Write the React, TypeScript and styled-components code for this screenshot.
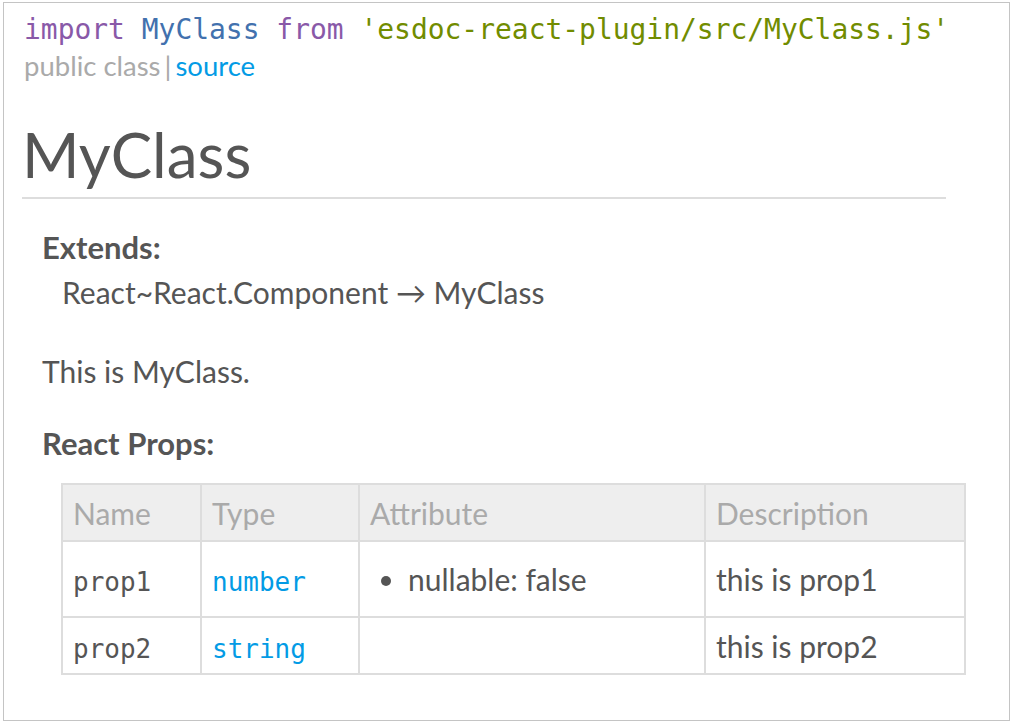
import React from "react";
import styled, { createGlobalStyle } from "styled-components";

const Global = createGlobalStyle`
  html, body { margin: 0; padding: 0; background: #fff; }
  body { font-family: "Lato", "Noto Sans", sans-serif; color: #555; }
`;

const Frame = styled.div`
  box-sizing: border-box;
  margin: 2px 0 0 3px;
  width: 1007px;
  height: 719px;
  border: 1px solid #c4c4c4;
  padding: 8px 0 0 20px;
  overflow: hidden;
`;

const ImportLine = styled.div`
  font-family: "DejaVu Sans Mono", monospace;
  font-size: 27.95px;
  line-height: 38px;
  white-space: pre;
`;

const Tok = styled.span<{ $kind: "kw" | "id" | "str" }>`
  color: ${(p) => (p.$kind === "kw" ? "#8959a8" : p.$kind === "id" ? "#4271ae" : "#718c00")};
`;

const Meta = styled.div`
  font-size: 27.5px;
  line-height: 34px;
  color: #aaa;
`;

const Sep = styled.span`
  margin: 0 4px;
`;

const Link = styled.a`
  color: #039be5;
  text-decoration: none;
`;

const Title = styled.h1`
  margin: 35px 0 0 -2px;
  width: 924px;
  font-size: 62px;
  font-weight: 400;
  line-height: 72px;
  padding-bottom: 7px;
  border-bottom: 2px solid #ddd;
  color: #555;
`;

const Body = styled.div`
  padding-left: 18px;
  font-size: 30px;
`;

const Label = styled.div<{ $gap: number }>`
  font-weight: 700;
  font-size: 31px;
  margin-top: ${(p) => p.$gap}px;
  line-height: 40px;
`;

const ExtendsLine = styled.div`
  padding-left: 20px;
  line-height: 50px;
`;

const Desc = styled.p`
  margin: 34px 0 0;
  line-height: 40px;
`;

const PropsTable = styled.table`
  margin: 20px 0 0 19px;
  border-collapse: collapse;
  table-layout: fixed;
  border: 2px solid #ddd;
  width: 903px;
`;

const HeadCell = styled.th`
  background: #eee;
  color: #aaa;
  font-weight: 400;
  text-align: left;
  border: 2px solid #ddd;
  padding: 0 10px;
  height: 55px;
  font-size: 30px;
`;

const Cell = styled.td<{ $h: number }>`
  border: 2px solid #ddd;
  padding: 0 10px;
  height: ${(p) => p.$h}px;
  font-size: 30px;
  vertical-align: middle;
`;

const Mono = styled.span<{ $link?: boolean }>`
  font-family: "DejaVu Sans Mono", monospace;
  font-size: 26px;
  color: ${(p) => (p.$link ? "#039be5" : "#555")};
`;

const AttrList = styled.ul`
  margin: 0;
  padding-left: 38px;
`;

const cols = [139, 158, 346, 260];

const rows = [
  { name: "prop1", type: "number", attrs: ["nullable: false"], desc: "this is prop1", h: 74 },
  { name: "prop2", type: "string", attrs: [], desc: "this is prop2", h: 55 },
];

export default function App() {
  return (
    <>
      <Global />
      <Frame>
        <ImportLine>
          <Tok $kind="kw">import</Tok> <Tok $kind="id">MyClass</Tok> <Tok $kind="kw">from</Tok>{" "}
          <Tok $kind="str">'esdoc-react-plugin/src/MyClass.js'</Tok>
        </ImportLine>
        <Meta>
          public class<Sep>|</Sep>
          <Link href="#">source</Link>
        </Meta>
        <Title>MyClass</Title>
        <Body>
          <Label $gap={28}>Extends:</Label>
          <ExtendsLine>React~React.Component → MyClass</ExtendsLine>
          <Desc>This is MyClass.</Desc>
          <Label $gap={32}>React Props:</Label>
          <PropsTable>
            <colgroup>
              {cols.map((w, i) => (
                <col key={i} style={{ width: w }} />
              ))}
            </colgroup>
            <thead>
              <tr>
                <HeadCell>Name</HeadCell>
                <HeadCell>Type</HeadCell>
                <HeadCell>Attribute</HeadCell>
                <HeadCell>Description</HeadCell>
              </tr>
            </thead>
            <tbody>
              {rows.map((r) => (
                <tr key={r.name}>
                  <Cell $h={r.h}>
                    <Mono>{r.name}</Mono>
                  </Cell>
                  <Cell $h={r.h}>
                    <Mono $link>{r.type}</Mono>
                  </Cell>
                  <Cell $h={r.h}>
                    {r.attrs.length > 0 && (
                      <AttrList>
                        {r.attrs.map((a) => (
                          <li key={a}>{a}</li>
                        ))}
                      </AttrList>
                    )}
                  </Cell>
                  <Cell $h={r.h}>{r.desc}</Cell>
                </tr>
              ))}
            </tbody>
          </PropsTable>
        </Body>
      </Frame>
    </>
  );
}
